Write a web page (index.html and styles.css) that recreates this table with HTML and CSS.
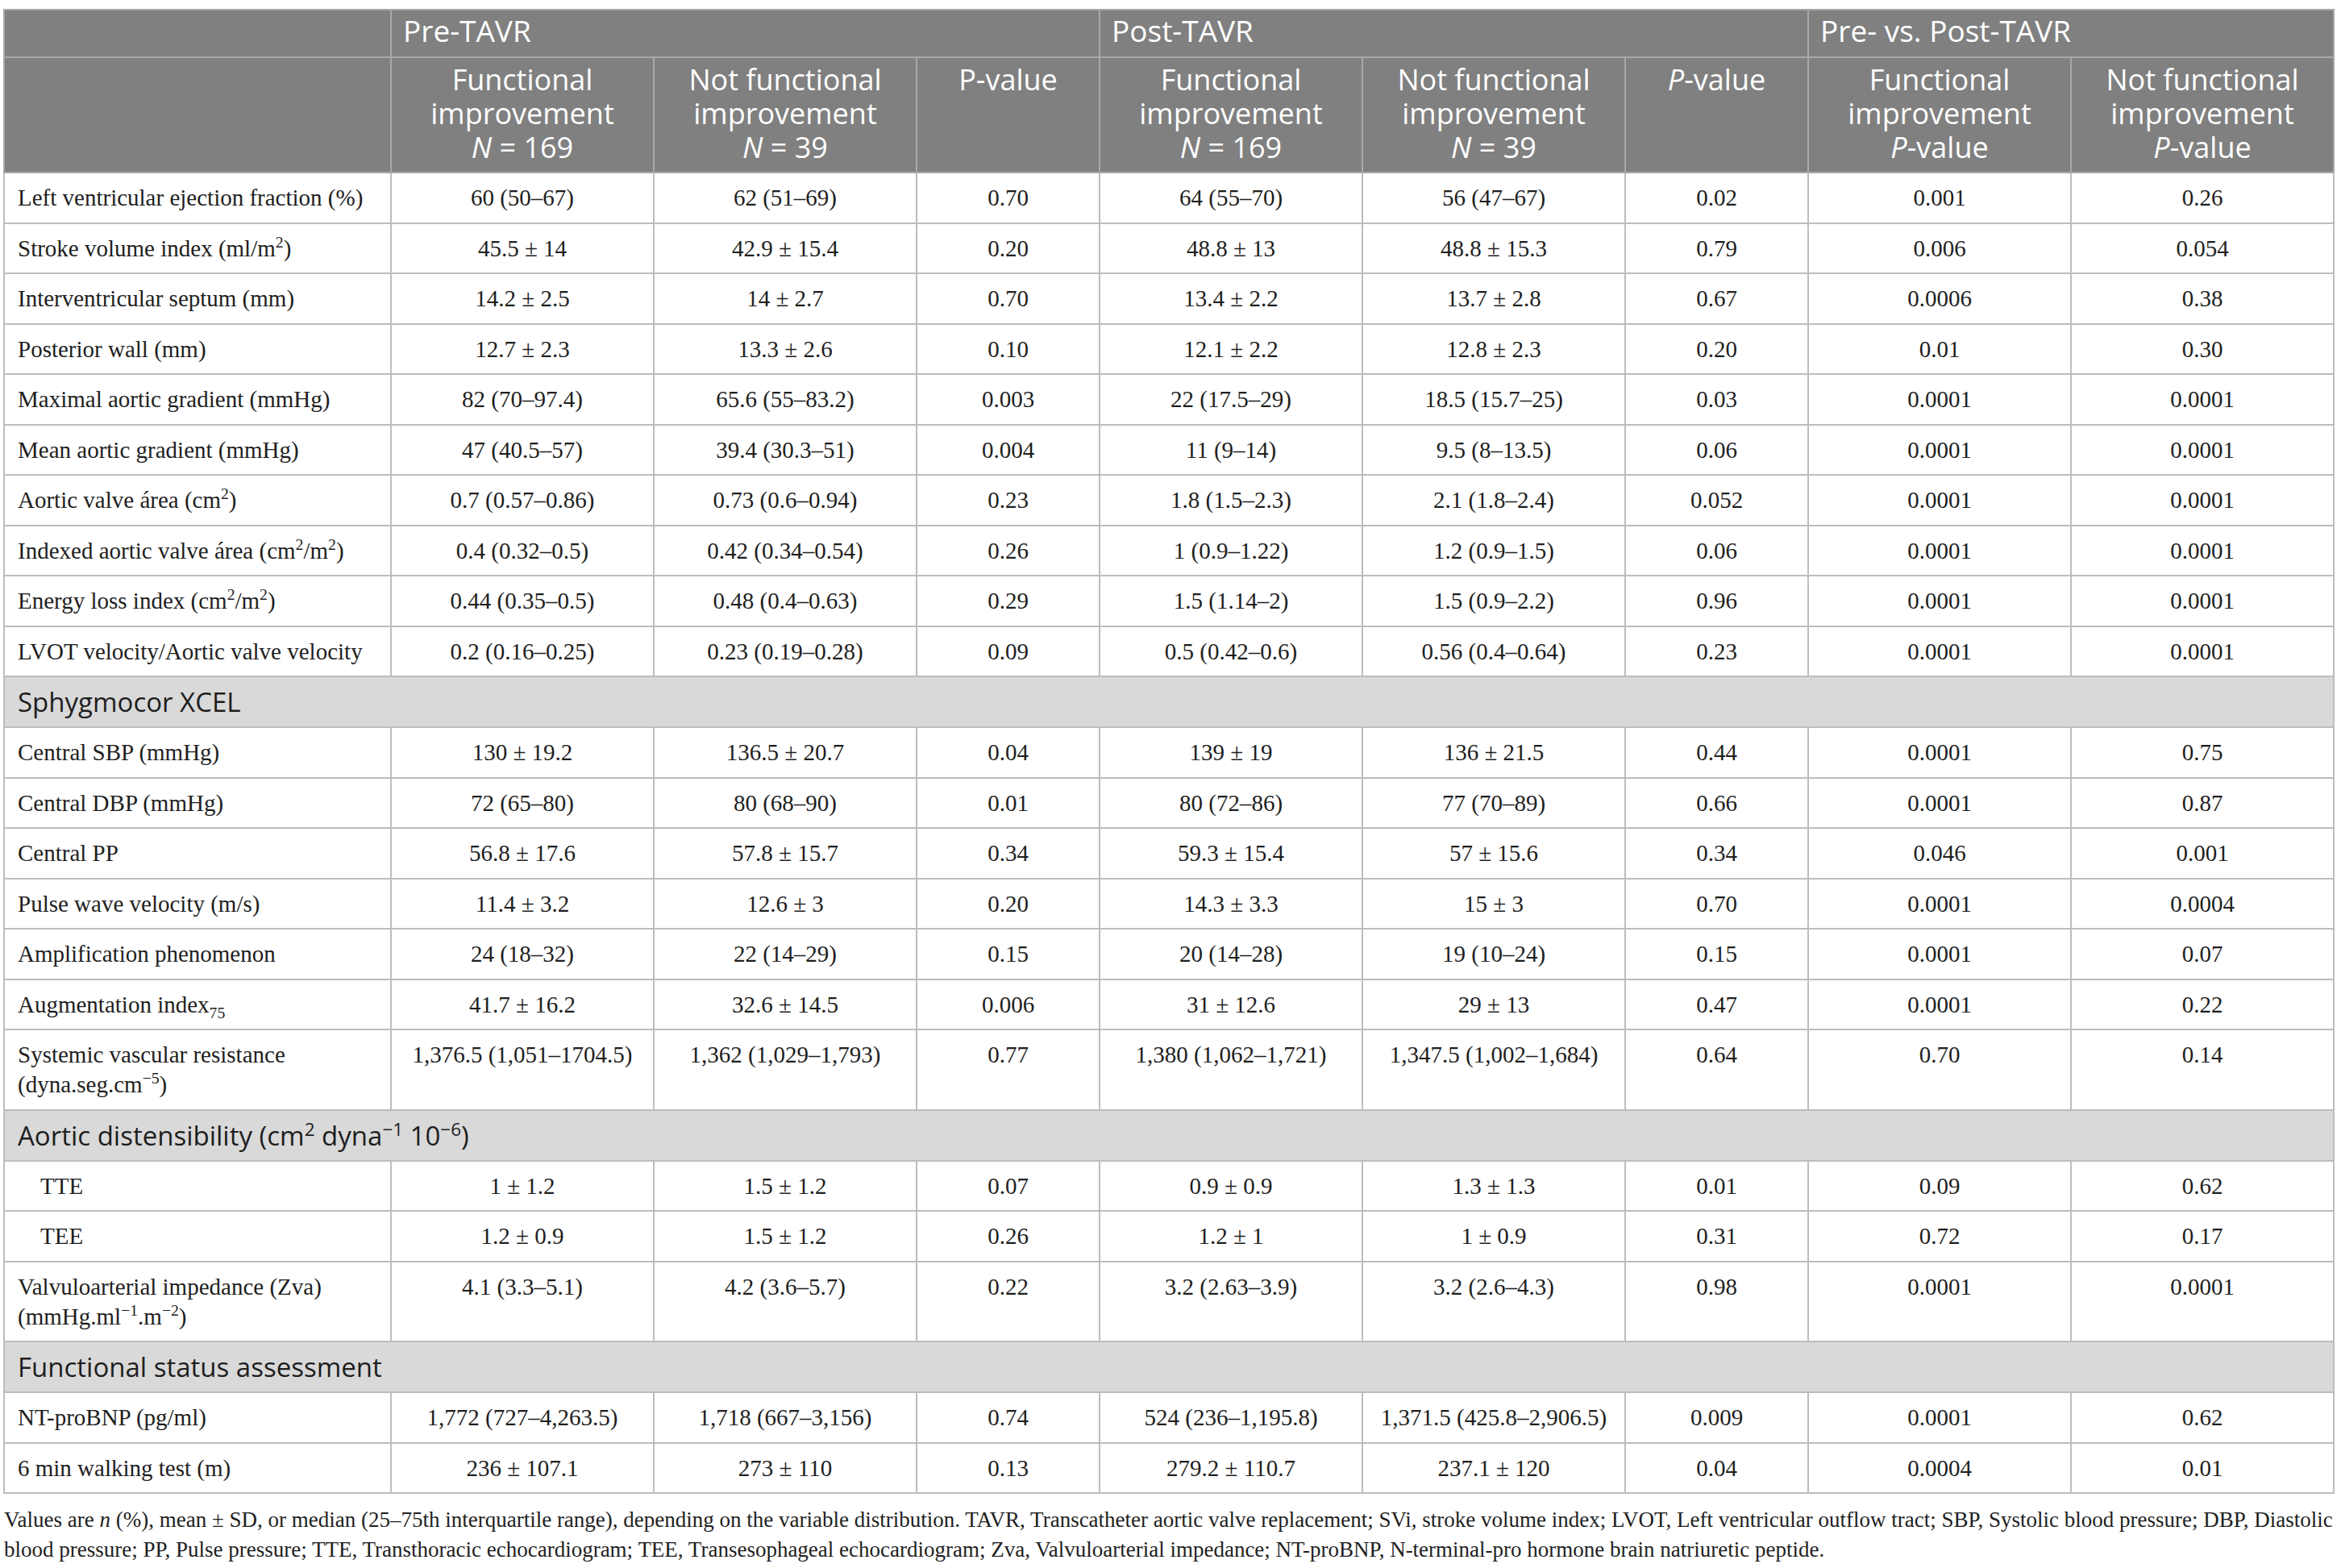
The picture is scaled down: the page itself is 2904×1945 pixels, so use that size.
FILE: index.html
```html
<!DOCTYPE html>
<html lang="en">
<head>
    <meta charset="UTF-8">
    <meta name="viewport" content="width=device-width, initial-scale=1.0">
    <title>Functional improvement after TAVR</title>
    <link rel="stylesheet" href="styles.css">
</head>
<body>
    <table class="data-table">
        <colgroup>
            <col class="c-label">
            <col class="c-val"><col class="c-val"><col class="c-p">
            <col class="c-val"><col class="c-val"><col class="c-p">
            <col class="c-val"><col class="c-val">
        </colgroup>
        <thead>
            <tr class="group">
                <th></th>
                <th colspan="3">Pre-TAVR</th>
                <th colspan="3">Post-TAVR</th>
                <th colspan="2" class="no-left">Pre- vs. Post-TAVR</th>
            </tr>
            <tr class="sub">
                <th></th>
                <th>Functional improvement<br><i>N</i> = 169</th>
                <th>Not functional improvement<br><i>N</i> = 39</th>
                <th>P-value</th>
                <th>Functional improvement<br><i>N</i> = 169</th>
                <th>Not functional improvement<br><i>N</i> = 39</th>
                <th><i>P</i>-value</th>
                <th>Functional improvement<br><i>P</i>-value</th>
                <th>Not functional improvement<br><i>P</i>-value</th>
            </tr>
        </thead>
        <tbody>
            <tr>
                <td class="label">Left ventricular ejection fraction (%)</td>
                <td>60 (50–67)</td><td>62 (51–69)</td><td>0.70</td>
                <td>64 (55–70)</td><td>56 (47–67)</td><td>0.02</td>
                <td>0.001</td><td>0.26</td>
            </tr>
            <tr>
                <td class="label">Stroke volume index (ml/m<sup>2</sup>)</td>
                <td>45.5 ± 14</td><td>42.9 ± 15.4</td><td>0.20</td>
                <td>48.8 ± 13</td><td>48.8 ± 15.3</td><td>0.79</td>
                <td>0.006</td><td>0.054</td>
            </tr>
            <tr>
                <td class="label">Interventricular septum (mm)</td>
                <td>14.2 ± 2.5</td><td>14 ± 2.7</td><td>0.70</td>
                <td>13.4 ± 2.2</td><td>13.7 ± 2.8</td><td>0.67</td>
                <td>0.0006</td><td>0.38</td>
            </tr>
            <tr>
                <td class="label">Posterior wall (mm)</td>
                <td>12.7 ± 2.3</td><td>13.3 ± 2.6</td><td>0.10</td>
                <td>12.1 ± 2.2</td><td>12.8 ± 2.3</td><td>0.20</td>
                <td>0.01</td><td>0.30</td>
            </tr>
            <tr>
                <td class="label">Maximal aortic gradient (mmHg)</td>
                <td>82 (70–97.4)</td><td>65.6 (55–83.2)</td><td>0.003</td>
                <td>22 (17.5–29)</td><td>18.5 (15.7–25)</td><td>0.03</td>
                <td>0.0001</td><td>0.0001</td>
            </tr>
            <tr>
                <td class="label">Mean aortic gradient (mmHg)</td>
                <td>47 (40.5–57)</td><td>39.4 (30.3–51)</td><td>0.004</td>
                <td>11 (9–14)</td><td>9.5 (8–13.5)</td><td>0.06</td>
                <td>0.0001</td><td>0.0001</td>
            </tr>
            <tr>
                <td class="label">Aortic valve área (cm<sup>2</sup>)</td>
                <td>0.7 (0.57–0.86)</td><td>0.73 (0.6–0.94)</td><td>0.23</td>
                <td>1.8 (1.5–2.3)</td><td>2.1 (1.8–2.4)</td><td>0.052</td>
                <td>0.0001</td><td>0.0001</td>
            </tr>
            <tr>
                <td class="label">Indexed aortic valve área (cm<sup>2</sup>/m<sup>2</sup>)</td>
                <td>0.4 (0.32–0.5)</td><td>0.42 (0.34–0.54)</td><td>0.26</td>
                <td>1 (0.9–1.22)</td><td>1.2 (0.9–1.5)</td><td>0.06</td>
                <td>0.0001</td><td>0.0001</td>
            </tr>
            <tr>
                <td class="label">Energy loss index (cm<sup>2</sup>/m<sup>2</sup>)</td>
                <td>0.44 (0.35–0.5)</td><td>0.48 (0.4–0.63)</td><td>0.29</td>
                <td>1.5 (1.14–2)</td><td>1.5 (0.9–2.2)</td><td>0.96</td>
                <td>0.0001</td><td>0.0001</td>
            </tr>
            <tr>
                <td class="label">LVOT velocity/Aortic valve velocity</td>
                <td>0.2 (0.16–0.25)</td><td>0.23 (0.19–0.28)</td><td>0.09</td>
                <td>0.5 (0.42–0.6)</td><td>0.56 (0.4–0.64)</td><td>0.23</td>
                <td>0.0001</td><td>0.0001</td>
            </tr>
            <tr class="section">
                <td colspan="9">Sphygmocor XCEL</td>
            </tr>
            <tr>
                <td class="label">Central SBP (mmHg)</td>
                <td>130 ± 19.2</td><td>136.5 ± 20.7</td><td>0.04</td>
                <td>139 ± 19</td><td>136 ± 21.5</td><td>0.44</td>
                <td>0.0001</td><td>0.75</td>
            </tr>
            <tr>
                <td class="label">Central DBP (mmHg)</td>
                <td>72 (65–80)</td><td>80 (68–90)</td><td>0.01</td>
                <td>80 (72–86)</td><td>77 (70–89)</td><td>0.66</td>
                <td>0.0001</td><td>0.87</td>
            </tr>
            <tr>
                <td class="label">Central PP</td>
                <td>56.8 ± 17.6</td><td>57.8 ± 15.7</td><td>0.34</td>
                <td>59.3 ± 15.4</td><td>57 ± 15.6</td><td>0.34</td>
                <td>0.046</td><td>0.001</td>
            </tr>
            <tr>
                <td class="label">Pulse wave velocity (m/s)</td>
                <td>11.4 ± 3.2</td><td>12.6 ± 3</td><td>0.20</td>
                <td>14.3 ± 3.3</td><td>15 ± 3</td><td>0.70</td>
                <td>0.0001</td><td>0.0004</td>
            </tr>
            <tr>
                <td class="label">Amplification phenomenon</td>
                <td>24 (18–32)</td><td>22 (14–29)</td><td>0.15</td>
                <td>20 (14–28)</td><td>19 (10–24)</td><td>0.15</td>
                <td>0.0001</td><td>0.07</td>
            </tr>
            <tr>
                <td class="label">Augmentation index<sub>75</sub></td>
                <td>41.7 ± 16.2</td><td>32.6 ± 14.5</td><td>0.006</td>
                <td>31 ± 12.6</td><td>29 ± 13</td><td>0.47</td>
                <td>0.0001</td><td>0.22</td>
            </tr>
            <tr>
                <td class="label">Systemic vascular resistance<br>(dyna.seg.cm<sup>−5</sup>)</td>
                <td>1,376.5 (1,051–1704.5)</td><td>1,362 (1,029–1,793)</td><td>0.77</td>
                <td>1,380 (1,062–1,721)</td><td>1,347.5 (1,002–1,684)</td><td>0.64</td>
                <td>0.70</td><td>0.14</td>
            </tr>
            <tr class="section">
                <td colspan="9">Aortic distensibility (cm<sup>2</sup> dyna<sup>−1</sup> 10<sup>−6</sup>)</td>
            </tr>
            <tr>
                <td class="label indent">TTE</td>
                <td>1 ± 1.2</td><td>1.5 ± 1.2</td><td>0.07</td>
                <td>0.9 ± 0.9</td><td>1.3 ± 1.3</td><td>0.01</td>
                <td>0.09</td><td>0.62</td>
            </tr>
            <tr>
                <td class="label indent">TEE</td>
                <td>1.2 ± 0.9</td><td>1.5 ± 1.2</td><td>0.26</td>
                <td>1.2 ± 1</td><td>1 ± 0.9</td><td>0.31</td>
                <td>0.72</td><td>0.17</td>
            </tr>
            <tr>
                <td class="label">Valvuloarterial impedance (Zva)<br>(mmHg.ml<sup>−1</sup>.m<sup>−2</sup>)</td>
                <td>4.1 (3.3–5.1)</td><td>4.2 (3.6–5.7)</td><td>0.22</td>
                <td>3.2 (2.63–3.9)</td><td>3.2 (2.6–4.3)</td><td>0.98</td>
                <td>0.0001</td><td>0.0001</td>
            </tr>
            <tr class="section">
                <td colspan="9">Functional status assessment</td>
            </tr>
            <tr>
                <td class="label">NT-proBNP (pg/ml)</td>
                <td>1,772 (727–4,263.5)</td><td>1,718 (667–3,156)</td><td>0.74</td>
                <td>524 (236–1,195.8)</td><td>1,371.5 (425.8–2,906.5)</td><td>0.009</td>
                <td>0.0001</td><td>0.62</td>
            </tr>
            <tr>
                <td class="label">6 min walking test (m)</td>
                <td>236 ± 107.1</td><td>273 ± 110</td><td>0.13</td>
                <td>279.2 ± 110.7</td><td>237.1 ± 120</td><td>0.04</td>
                <td>0.0004</td><td>0.01</td>
            </tr>
        </tbody>
    </table>

    <p class="footnote">Values are <i>n</i> (%), mean ± SD, or median (25–75th interquartile range), depending on the variable distribution. TAVR, Transcatheter aortic valve replacement; SVi, stroke volume index; LVOT, Left ventricular outflow tract; SBP, Systolic blood pressure; DBP, Diastolic<br>blood pressure; PP, Pulse pressure; TTE, Transthoracic echocardiogram; TEE, Transesophageal echocardiogram; Zva, Valvuloarterial impedance; NT-proBNP, N-terminal-pro hormone brain natriuretic peptide.</p>
</body>
</html>
```

FILE: styles.css
```css
body {
    margin: 0;
    padding: 11px 8px 0 4px;
    background: #fff;
    color: #1e1e1e;
    font-family: "Liberation Serif", "Times New Roman", serif;
}

.data-table {
    width: 2892px;
    border-collapse: collapse;
    table-layout: fixed;
}
.c-label { width: 480px; }
.c-val { width: 326px; }
.c-p { width: 227px; }

.data-table th {
    background: #808080;
    color: #fff;
    font-family: "Open Sans", sans-serif;
    font-weight: normal;
    font-size: 36px;
    border: 2px solid #a8a8a8;
}
.group th {
    text-align: left;
    line-height: 40px;
    padding: 5px 14px 12px;
    font-size: 37px;
}
.group th.no-left {
    border-left-color: #808080;
}
.sub th {
    text-align: center;
    vertical-align: top;
    line-height: 42px;
    padding: 6px 10px 9px;
}

.data-table td {
    border: 2px solid #bdbdbd;
    font-size: 29px;
    line-height: 37px;
    padding: 12px 10px 11.5px;
    text-align: center;
    vertical-align: top;
}
.data-table td.label {
    text-align: left;
    padding-left: 16px;
}
.data-table td.indent {
    padding-left: 44px;
}
.section td {
    background: #d9d9d9;
    font-family: "Open Sans", sans-serif;
    font-size: 33px;
    text-align: left;
    padding: 12px 16px;
}

sup, sub {
    font-size: 0.68em;
    line-height: 0;
}

.footnote {
    margin: 14px 0 0 1px;
    font-size: 27px;
    line-height: 37px;
    white-space: nowrap;
}
```
